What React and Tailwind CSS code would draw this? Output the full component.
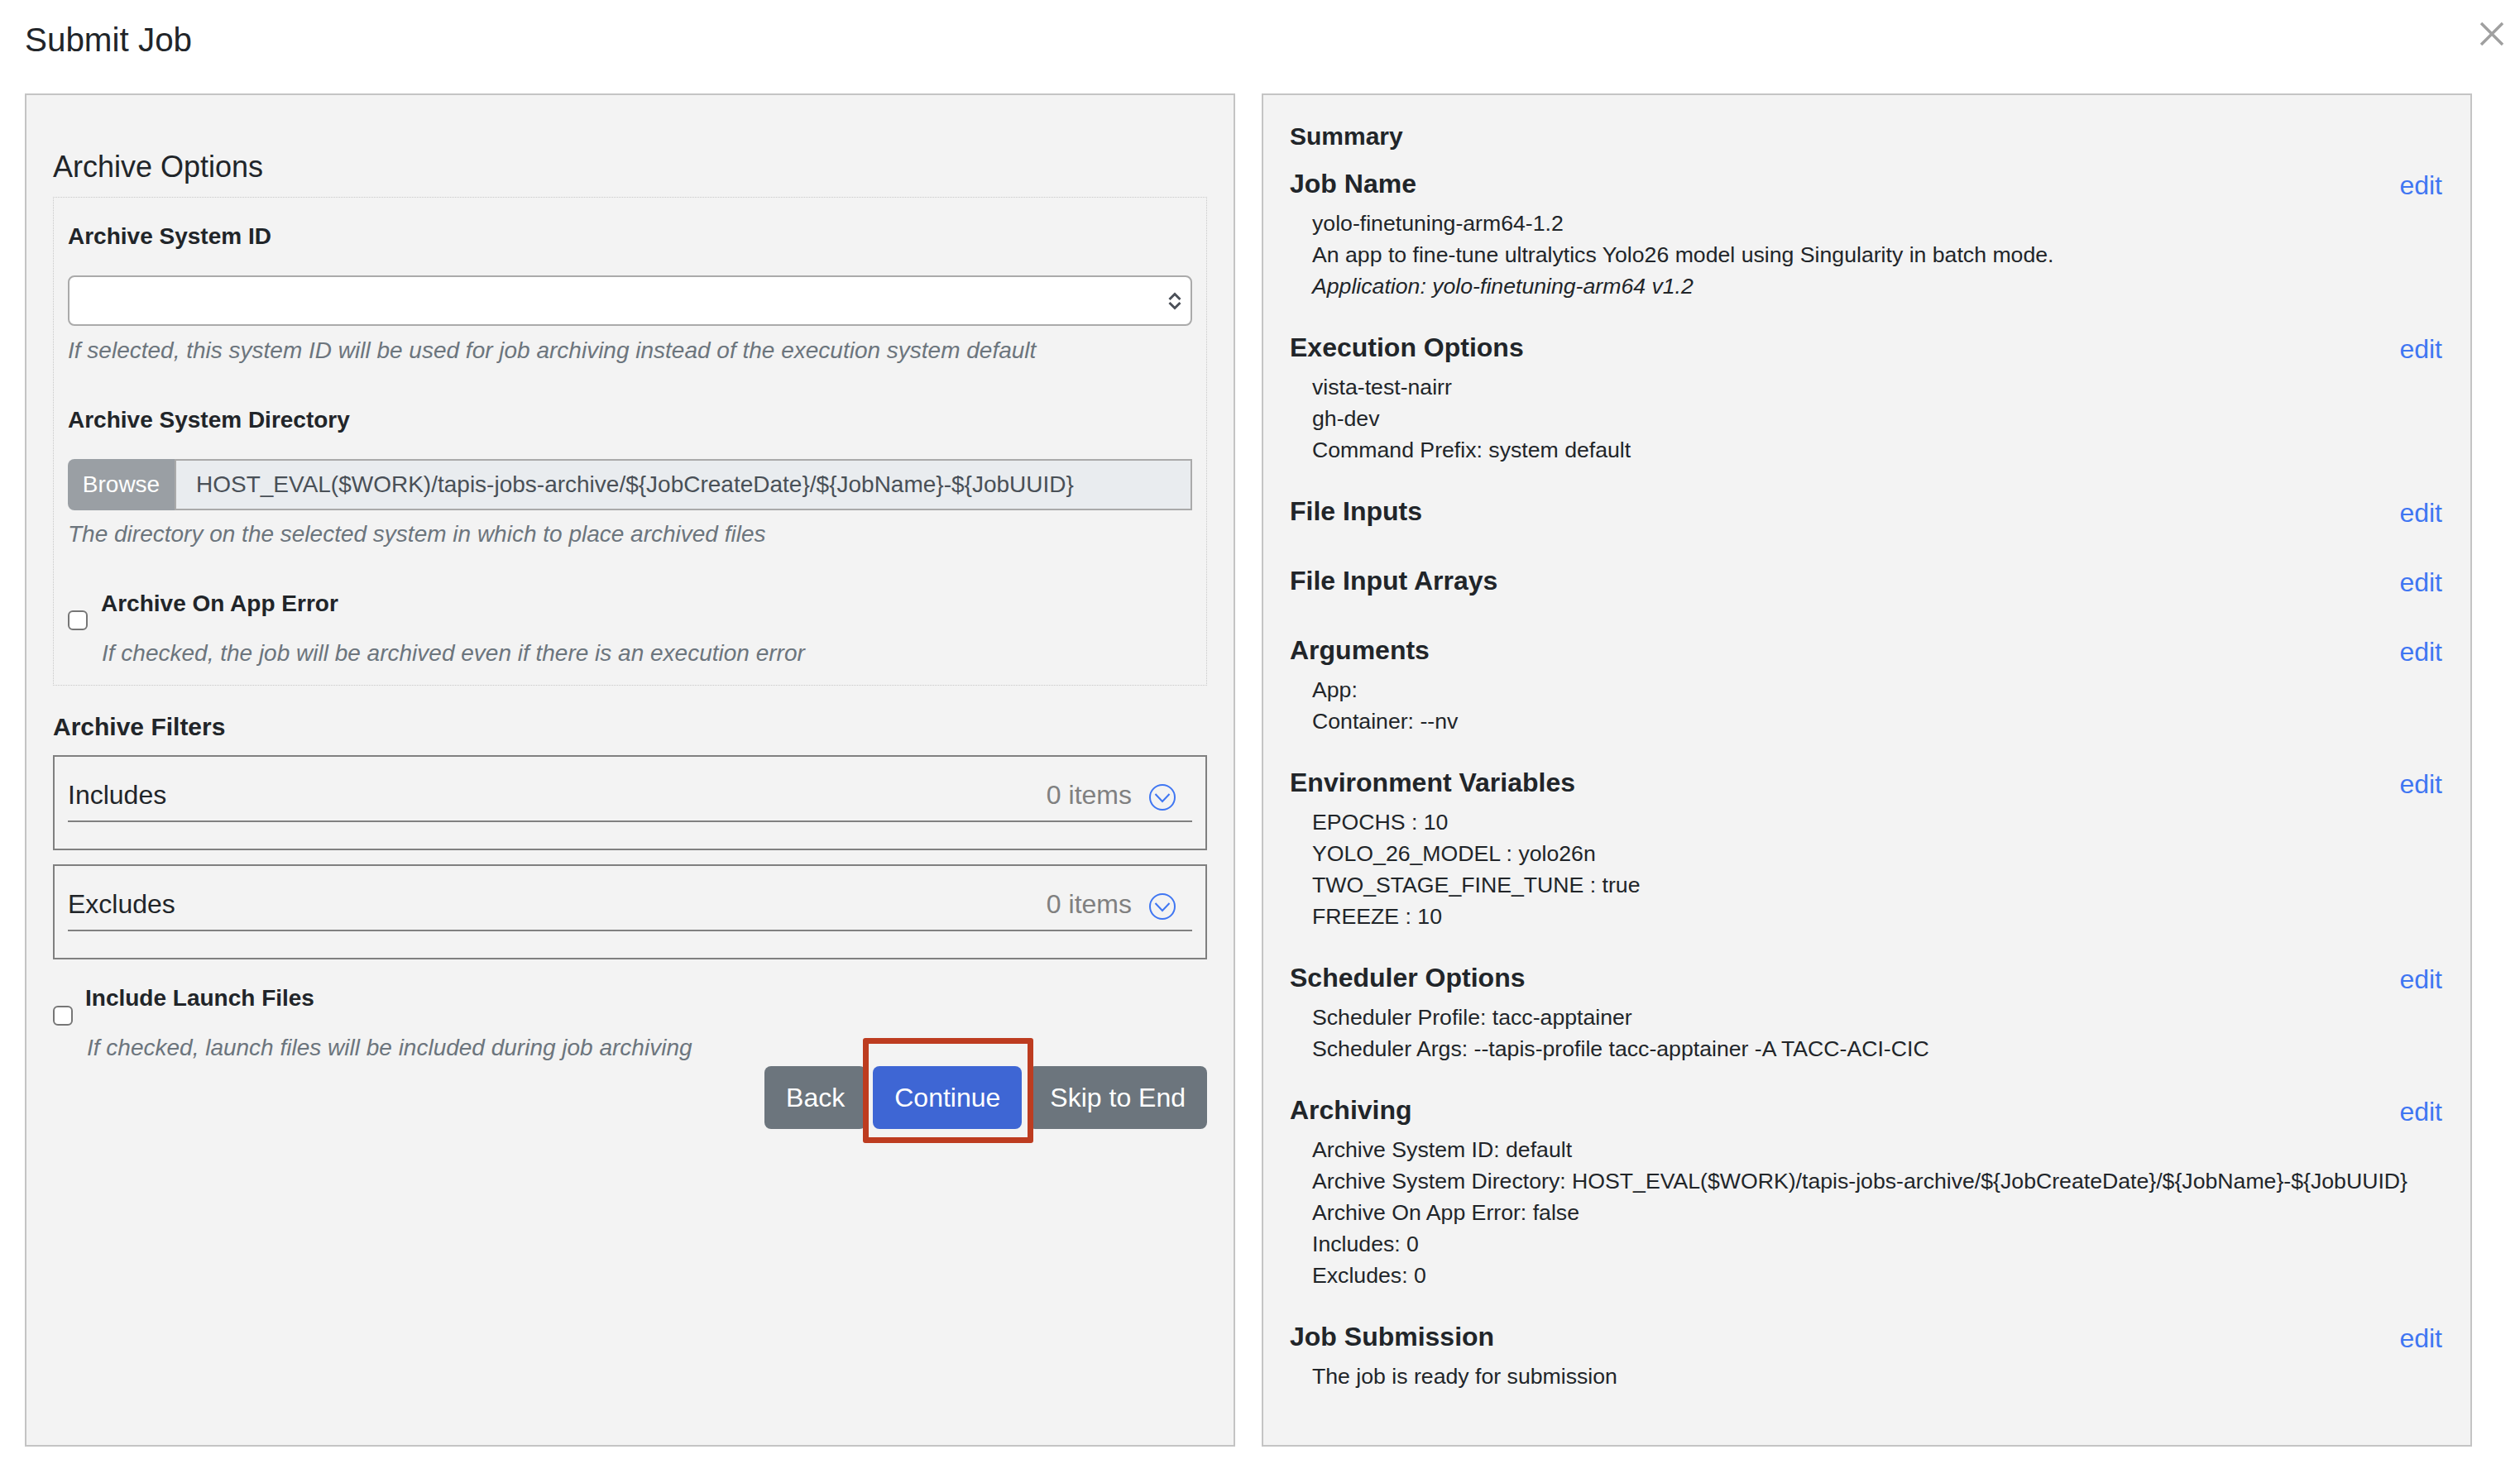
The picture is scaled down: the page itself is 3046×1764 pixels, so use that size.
import React from "react";

const font = "font-['Liberation_Sans',Arial,sans-serif]";

function ChevronCircle() {
  return (
    <svg width="32" height="32" viewBox="0 0 32 32" fill="none" stroke="#3f76f2" strokeWidth="2">
      <circle cx="16" cy="16" r="15" />
      <path d="M7.5 12 L16 21 L24.5 12" />
    </svg>
  );
}

function FilterBox({ label, className }) {
  return (
    <div className={`h-[115px] border-2 border-[#808080] px-[16px] ${className}`}>
      <div className="h-[79px] border-b-2 border-[#808080] flex items-start">
        <span className="text-[32px] leading-[48px] mt-[22px] flex-1">{label}</span>
        <span className="text-[32px] leading-[48px] mt-[22px] text-[#808080]">0 items</span>
        <span className="ml-[21px] mr-[20px] mt-[33px]">
          <ChevronCircle />
        </span>
      </div>
    </div>
  );
}

function Help({ children, className = "" }) {
  return <div className={`text-[28px] leading-[42px] italic text-[#6c757d] ${className}`}>{children}</div>;
}

function Label({ children, className = "" }) {
  return <div className={`text-[28px] leading-[42px] font-bold ${className}`}>{children}</div>;
}

function Check({ className = "" }) {
  return (
    <input
      type="checkbox"
      className={`appearance-none shrink-0 w-[24px] h-[24px] bg-white border-2 border-[#767676] rounded-[6px] ${className}`}
    />
  );
}

function Section({ title, lines = [] }) {
  return (
    <div className="pb-[31px]">
      <div className="flex items-center justify-between h-[48px] mb-[5px]">
        <span className="text-[32px] font-bold">{title}</span>
        <span className="text-[32px] text-[#3f76f2] mt-[3px]">edit</span>
      </div>
      <div className="pl-[27px] text-[26.67px] leading-[38px]">
        {lines.map((l, i) => (
          <div key={i} className={l.italic ? "italic" : ""}>{l.text || l}</div>
        ))}
      </div>
    </div>
  );
}

const sections = [
  {
    title: "Job Name",
    lines: [
      "yolo-finetuning-arm64-1.2",
      "An app to fine-tune ultralytics Yolo26 model using Singularity in batch mode.",
      { text: "Application: yolo-finetuning-arm64 v1.2", italic: true },
    ],
  },
  { title: "Execution Options", lines: ["vista-test-nairr", "gh-dev", "Command Prefix: system default"] },
  { title: "File Inputs" },
  { title: "File Input Arrays" },
  { title: "Arguments", lines: ["App:", "Container: --nv"] },
  {
    title: "Environment Variables",
    lines: ["EPOCHS : 10", "YOLO_26_MODEL : yolo26n", "TWO_STAGE_FINE_TUNE : true", "FREEZE : 10"],
  },
  {
    title: "Scheduler Options",
    lines: ["Scheduler Profile: tacc-apptainer", "Scheduler Args: --tapis-profile tacc-apptainer -A TACC-ACI-CIC"],
  },
  {
    title: "Archiving",
    lines: [
      "Archive System ID: default",
      "Archive System Directory: HOST_EVAL($WORK)/tapis-jobs-archive/${JobCreateDate}/${JobName}-${JobUUID}",
      "Archive On App Error: false",
      "Includes: 0",
      "Excludes: 0",
    ],
  },
  { title: "Job Submission", lines: ["The job is ready for submission"] },
];

export default function App() {
  return (
    <div className={`w-[3046px] h-[1764px] bg-white text-[#212529] overflow-hidden ${font}`}>
      {/* Header */}
      <div className="h-[113px] flex justify-between pl-[30px] pr-[20px]">
        <div className="text-[40.4px] leading-[60px] mt-[18px]">Submit Job</div>
        <svg className="mt-[27px]" width="28" height="28" viewBox="0 0 28 28" stroke="#a0a0a0" strokeWidth="3.5">
          <path d="M1 1 L27 27 M27 1 L1 27" />
        </svg>
      </div>

      <div className="flex gap-[32px] pl-[30px]">
        {/* Left panel */}
        <div className="w-[1463px] h-[1636px] border-2 border-[#c4c4c4] bg-[#f3f3f3] px-[32px] pt-[60px]">
          <div className="text-[36px] leading-[54px]">Archive Options</div>
          <div className="mt-[9px] border border-dotted border-[#c8c8c8] px-[17px] pt-[26px] pb-[17px]">
            <Label>Archive System ID</Label>
            <div className="mt-[26px] h-[61px] bg-white border-2 border-[#aaaaaa] rounded-[8px] flex items-center justify-end pr-[11px]">
              <svg width="16" height="22" viewBox="0 0 16 22" fill="none" stroke="#4b5058" strokeWidth="3">
                <path d="M1.5 9 L8 2.5 L14.5 9 M1.5 13 L8 19.5 L14.5 13" />
              </svg>
            </div>
            <Help className="mt-[9px]">If selected, this system ID will be used for job archiving instead of the execution system default</Help>

            <Label className="mt-[42px]">Archive System Directory</Label>
            <div className="mt-[26px] h-[62px] flex">
              <div className="w-[129px] bg-[#9a9fa4] text-white text-[28px] flex items-center justify-center rounded-l-[8px]">Browse</div>
              <div className="flex-1 bg-[#e9ecef] border-2 border-[#aaaaaa] text-[#495057] text-[28px] flex items-center pl-[24px]">
                {"HOST_EVAL($WORK)/tapis-jobs-archive/${JobCreateDate}/${JobName}-${JobUUID}"}
              </div>
            </div>
            <Help className="mt-[8px]">The directory on the selected system in which to place archived files</Help>

            <div className="mt-[42px] flex gap-[16px]">
              <Check className="mt-[29px]" />
              <div>
                <Label>Archive On App Error</Label>
                <Help className="mt-[18px] ml-[1px]">If checked, the job will be archived even if there is an execution error</Help>
              </div>
            </div>
          </div>

          <div className="mt-[27px] text-[30px] leading-[46px] font-bold">Archive Filters</div>
          <FilterBox label="Includes" className="mt-[11px]" />
          <FilterBox label="Excludes" className="mt-[17px]" />

          <div className="mt-[26px] flex gap-[15px]">
            <Check className="mt-[30px]" />
            <div>
              <Label>Include Launch Files</Label>
              <Help className="mt-[18px] ml-[2px]">If checked, launch files will be included during job archiving</Help>
            </div>
          </div>

          <div className="mt-[1px] flex justify-end gap-[8px] text-[32px] text-white">
            <button className="h-[76px] px-[26px] bg-[#6c757d] rounded-[8px]">Back</button>
            <div className="relative">
              <button className="h-[76px] px-[26px] bg-[#3e66d4] rounded-[8px]">Continue</button>
              <div className="absolute left-[-12px] right-[-14px] top-[-34px] bottom-[-17px] border-[7px] border-[#bd3c20] rounded-[3px]" />
            </div>
            <button className="h-[76px] px-[26px] bg-[#6c757d] rounded-[8px]">Skip to End</button>
          </div>
        </div>

        {/* Right panel */}
        <div className="w-[1463px] h-[1636px] border-2 border-[#c4c4c4] bg-[#f3f3f3] pl-[32px] pr-[34px] pt-[30px]">
          <div className="text-[30px] leading-[40px] font-bold mb-[13px]">Summary</div>
          {sections.map((s) => (
            <Section key={s.title} title={s.title} lines={s.lines} />
          ))}
        </div>
      </div>
    </div>
  );
}
